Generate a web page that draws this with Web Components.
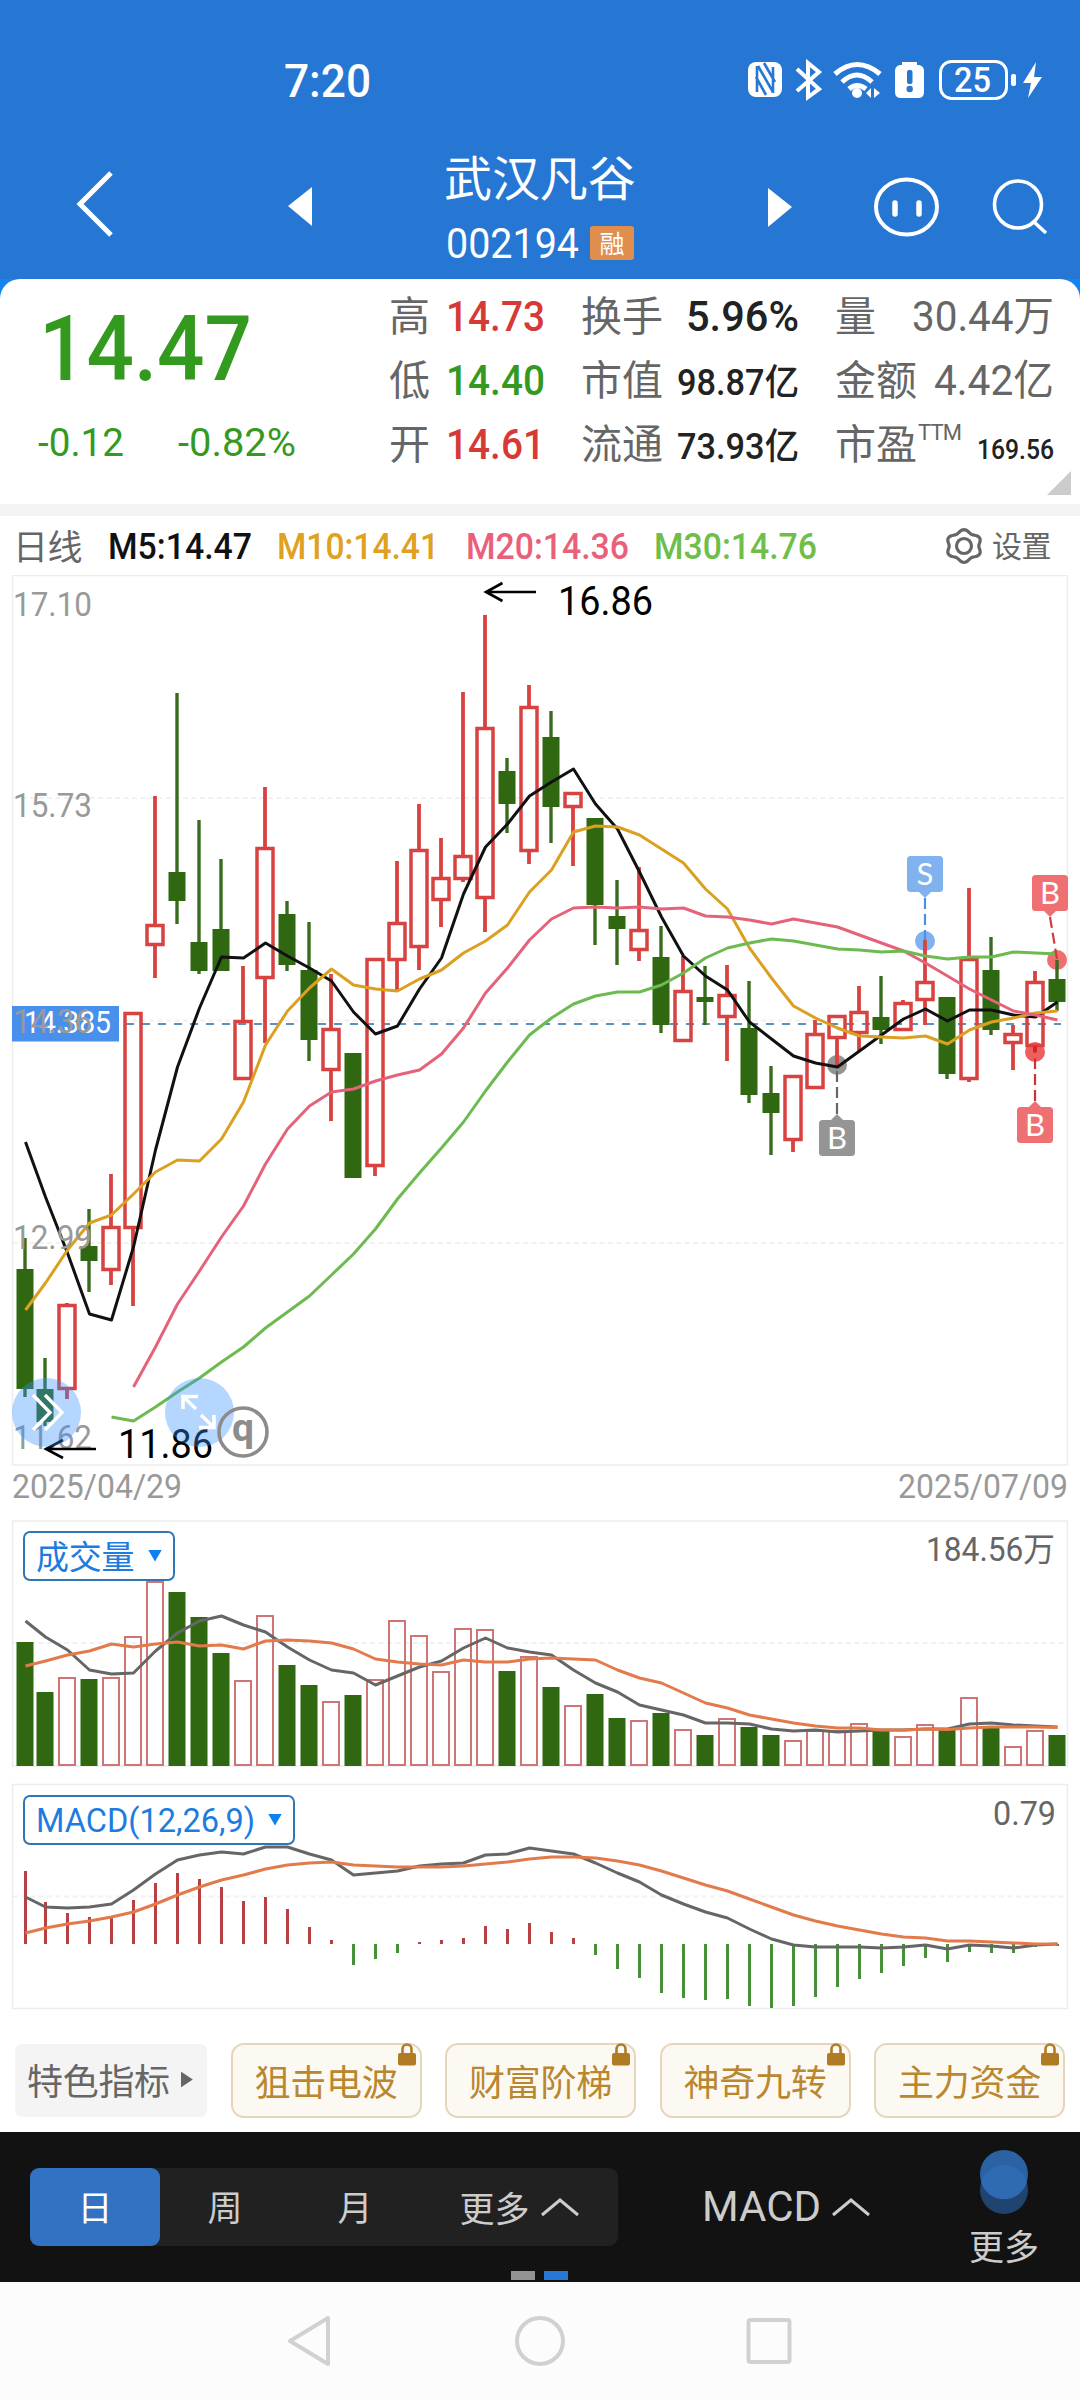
<!DOCTYPE html>
<html lang="zh-CN">
<head>
<meta charset="utf-8">
<title>武汉凡谷 002194</title>
<style>
html,body{margin:0;padding:0;background:#fff}
body{width:1080px;font-family:Roboto,"Noto Sans CJK SC",sans-serif;color:#222}
</style>
</head>
<body>
<stock-page></stock-page>
<script>
const define=(name,html,setup)=>{
  const t=document.createElement('template');t.innerHTML=html;
  customElements.define(name,class extends HTMLElement{
    connectedCallback(){
      if(this.shadowRoot)return;
      const r=this.attachShadow({mode:'open'});
      r.appendChild(t.content.cloneNode(true));
      if(setup)setup(this,r);
    }
  });
};

// Text stretched horizontally to a given width.
define('fit-text',`<style>:host{display:inline-block;white-space:nowrap;flex:none}span{display:inline-block;transform-origin:0 50%}</style><span><slot></slot></span>`,(el,r)=>{
  const w=+el.getAttribute('w'),s=r.querySelector('span');
  if(el.hasAttribute('size'))el.style.fontSize=el.getAttribute('size')+'px';
  const n=s.getBoundingClientRect().width;
  el.style.width=w+'px';
  s.style.transform='scaleX('+(w/n)+')';
});

define('status-bar',`<style>
:host{display:flex;height:160px;align-items:center;color:#fff}
fit-text{margin-left:284px;font-weight:500}
svg{margin-left:375px}
</style>
<fit-text w="87" size="47">7:20</fit-text>
<svg width="300" height="44" viewBox="746 58 300 44">
<rect x="748" y="62" width="34" height="35" rx="8" fill="#fff"/>
<path d="M757 66V92M758 66L773 92M773 67V93M764 63L775 82M756 77L766 95" stroke="#2577d3" stroke-width="2.6" fill="none"/>
<path d="M797 69L819 89L808 97V63L819 72L797 91" fill="none" stroke="#fff" stroke-width="4"/>
<g fill="none" stroke="#fff" stroke-width="5"><path d="M835 74Q857 55 880 74"/><path d="M842 82Q857 68 872 82"/><path d="M849 89Q857 82 866 89" /></g>
<circle cx="857" cy="93" r="5" fill="#fff"/>
<path d="M871 88V98L866 93ZM874 88V98L880 93Z" fill="#fff"/>
<path d="M902 62H917V65H919Q924 66 924 71V92Q924 98 918 98H901Q895 98 895 92V71Q895 66 900 65H902Z" fill="#fff"/>
<rect x="907" y="70" width="5.5" height="14" rx="2" fill="#2577d3"/><circle cx="909.7" cy="89" r="3.2" fill="#2577d3"/>
<rect x="940.5" y="61.500" width="66" height="37" rx="11" fill="none" stroke="#fff" stroke-width="3"/>
<rect x="1011" y="74" width="5" height="12" rx="2" fill="#fff"/>
<text x="954" y="92" font-family="Roboto" font-weight="500" font-size="35" textLength="37" lengthAdjust="spacingAndGlyphs" fill="#fff">25</text>
<path d="M1036 62L1023 83H1031L1028 98L1042 77H1034Z" fill="#fff"/>
</svg>`);

define('stock-header',`<style>
:host{display:flex;height:119px;align-items:flex-start;color:#fff}
svg{flex:none;display:block;overflow:visible}
.t{margin-left:134px;width:188px;height:110px;display:flex;flex-direction:column;margin-top:-10px}
.n{font-size:48px;line-height:50px;font-family:"Noto Sans CJK SC",sans-serif;white-space:nowrap;margin-left:-2px;letter-spacing:-.1px}
.c{display:flex;align-items:center;justify-content:space-between;height:34px;margin-top:26px}
.b{width:44px;height:34px;background:#e08e4d;border-radius:3px;font:25px/33px "Noto Sans CJK SC",sans-serif;text-align:center}
</style>
<svg style="margin-left:74px" width="40" height="100" viewBox="74 160 40 100"><path d="M111 173L80 204L111 235" fill="none" stroke="#fff" stroke-width="5"/></svg>
<svg style="margin-left:174px" width="24" height="100" viewBox="288 160 24 100"><path d="M288 206L312 187V226Z" fill="#fff"/></svg>
<div class="t"><div class="n">武汉凡谷</div><div class="c"><fit-text w="133" size="42">002194</fit-text><div class="b">融</div></div></div>
<svg style="margin-left:134px" width="24" height="100" viewBox="768 160 24 100"><path d="M792 207L768 188V227Z" fill="#fff"/></svg>
<svg style="margin-left:80px" width="70" height="100" viewBox="872 160 70 100"><ellipse cx="906.5" cy="207" rx="30.500" ry="27.500" fill="none" stroke="#fff" stroke-width="4"/><path d="M895 203V214M919 203V214" stroke="#fff" stroke-width="5.500" stroke-linecap="round"/></svg>
<svg style="margin-left:48px" width="60" height="100" viewBox="990 160 60 100"><circle cx="1018" cy="204.500" r="23.500" fill="none" stroke="#fff" stroke-width="3.600"/><path d="M1034 222L1046 233" stroke="#fff" stroke-width="3.600"/></svg>`);

define('quote-cell',`<style>
:host{display:flex;justify-content:space-between;align-items:baseline;height:64px;line-height:64px}
.l{font:41px/64px "Noto Sans CJK SC",sans-serif;color:#666;white-space:nowrap}
</style><span class="l"><slot name="label"></slot></span><slot></slot>`);

define('quote-panel',`<style>
:host{display:block;background:#1484f2}
.card{background:#fff;border-radius:20px 20px 0 0;height:225px;display:flex;position:relative}
.left{width:389px;color:#339a1f}
.p{margin:31px 0 0 39px;height:80px;line-height:80px;font-weight:500}
.d{display:flex;margin:33px 0 0 38px;height:40px;line-height:40px}
.d fit-text+fit-text{margin-left:54px}
.g{display:flex;padding-top:2px;gap:36px}
.c1{width:156px}.c2{width:218px}.c3{width:219px}
.r{color:#d63a36;font-weight:500}.k{color:#222;font-weight:500}.gr{color:#339a1f;font-weight:500}.s{color:#666}
sup{font:22px/22px Roboto;vertical-align:19px;letter-spacing:-.8px;margin-left:1px}
.fold{position:absolute;right:9px;top:192px;width:24px;height:24px;background:#ccc;clip-path:polygon(100% 0,100% 100%,0 100%)}
.gap{height:12px;background:#f4f4f4}
</style>
<div class="card"><div class="left"><div class="p"><fit-text w="213" size="90">14.47</fit-text></div>
<div class="d"><fit-text w="86" size="38">-0.12</fit-text><fit-text w="118" size="38">-0.82%</fit-text></div></div>
<div class="g">
<div class="c1">
<quote-cell><span slot="label">高</span><fit-text class="r" w="99" size="42">14.73</fit-text></quote-cell>
<quote-cell><span slot="label">低</span><fit-text class="gr" w="99" size="42">14.40</fit-text></quote-cell>
<quote-cell><span slot="label">开</span><fit-text class="r" w="99" size="42">14.61</fit-text></quote-cell></div>
<div class="c2">
<quote-cell><span slot="label">换手</span><fit-text class="k" w="113" size="42">5.96%</fit-text></quote-cell>
<quote-cell><span slot="label">市值</span><fit-text class="k" w="122" size="36">98.87亿</fit-text></quote-cell>
<quote-cell><span slot="label">流通</span><fit-text class="k" w="122" size="36">73.93亿</fit-text></quote-cell></div>
<div class="c3">
<quote-cell><span slot="label">量</span><fit-text class="s" w="142" size="42">30.44万</fit-text></quote-cell>
<quote-cell><span slot="label">金额</span><fit-text class="s" w="120" size="42">4.42亿</fit-text></quote-cell>
<quote-cell><span slot="label">市盈<sup>TTM</sup></span><fit-text class="k" w="77" size="28">169.56</fit-text></quote-cell></div>
</div><div class="fold"></div></div><div class="gap"></div>`);

define('ma-legend',`<style>
:host{display:flex;height:59px;align-items:center;font-weight:500}
.k{font:35px/50px "Noto Sans CJK SC",sans-serif;color:#666;width:70px;margin:-2px 0 0 13px;letter-spacing:-.5px}
svg{margin-left:128px}
.s{font:30px/50px "Noto Sans CJK SC",sans-serif;color:#666;margin:-3px 0 0 9px;letter-spacing:-.5px}
fit-text{position:relative;top:1px}
</style><span class="k">日线</span>
<fit-text style="margin-left:25px;color:#111" w="144" size="36">M5:14.47</fit-text>
<fit-text style="margin-left:25px;color:#e0a020" w="162" size="36">M10:14.41</fit-text>
<fit-text style="margin-left:27px;color:#e9607a" w="163" size="36">M20:14.36</fit-text>
<fit-text style="margin-left:25px;color:#6fbe4a" w="163" size="36">M30:14.76</fit-text>
<svg width="38" height="38" viewBox="-19 -19 38 38" fill="none" stroke="#666" stroke-width="3.200" stroke-linejoin="round"><path id="g"/><circle r="7.500"/></svg>
<span class="s">设置</span>`,(el,r)=>{
  let d='';
  for(let a=0;a<360;a+=6){
    const q=15.2-1.500*Math.cos(6*a*Math.PI/180),t=a*Math.PI/180;
    d+=(a?'L':'M')+(q*Math.cos(t)*1.08).toFixed(2)+' '+(q*Math.sin(t)*.98).toFixed(2);
  }
  r.getElementById('g').setAttribute('d',d+'Z');
});

const X=i=>i?23+22*i:25;
const RED='#d84240',GREEN='#306812';
const line=(ys,color,w=2.800,from=0,dx=.5)=>`<polyline fill="none" stroke="${color}" stroke-width="${w}" stroke-linejoin="round" points="${ys.map((y,k)=>(X(k+from)+dx)+','+y).join(' ')}"/>`;
const frame=(y1,y2)=>`<rect x="12.500" y="${y1}" width="1055" height="${y2-y1}" fill="none" stroke="#ececec" stroke-width="1.400"/>`;
const grid=y=>`<path d="M13 ${y}H1066" stroke="#f1f1f1" stroke-width="1.800" stroke-dasharray="5 3.500"/>`;
const label=(x,y,w,size,fill,s,extra='')=>`<text x="${x}" y="${y}" font-size="${size}" fill="${fill}" textLength="${w}" lengthAdjust="spacingAndGlyphs" ${extra}>${s}</text>`;

// colour, high, body top, body bottom, low
const candles=`G1238,1269,1389,1397 G1358,1389,1422,1426 R1303,1304,1390,1399 G1209,1246,1261,1292 R1174,1226,1271,1285 R1012,1012,1229,1306 R796,924,946,978 G693,872,901,924 G820,942,971,974 G859,929,971,971 R966,1020,1080,1080 R787,847,979,1043 G901,914,965,971 G922,970,1040,1061 R974,1028,1071,1121 G1053,1053,1178,1178 R958,958,1167,1176 R861,922,961,990 R804,849,948,970 R838,877,901,927 R692,855,880,882 R615,727,899,932 G758,771,804,833 R685,706,852,864 G711,737,807,843 R792,792,808,866 G818,818,905,945 G880,916,929,965 R867,929,951,961 G926,957,1025,1033 R956,990,1042,1042 G966,997,1002,1025 R965,994,1018,1061 G981,1028,1095,1103 G1066,1093,1113,1155 R1075,1075,1141,1152 R1020,1033,1089,1089 R1015,1015,1039,1066 R986,1011,1034,1051 G976,1017,1030,1044 R1000,1002,1031,1031 R940,981,1001,1025 G997,997,1074,1079 R888,958,1080,1082 G937,970,1030,1035 R1025,1033,1044,1070 R971,981,1047,1052 G960,979,1002,1011`.split(' ').map(s=>[s[0],...s.slice(1).split(',').map(Number)]);
const ma5=[1142,1197,1253,1314,1320,1247,1150,1067,1008,957,958,943,956,968,981,1012,1034,1026,989,958,894,847,824,796,782,769,804,829,872,917,956,976,990,1022,1039,1056,1063,1067,1051,1035,1019,1009,1021,1010,1010,1015,1017,1002];
const ma10=[1310,1283,1250,1223,1215,1194,1172,1160,1161,1139,1102,1045,1011,988,969,985,989,991,979,970,953,941,925,892,870,832,826,827,835,849,863,889,909,948,978,1006,1018,1028,1036,1037,1038,1036,1044,1030,1022,1018,1013,1011];
const ma20=[1387,1347,1304,1271,1237,1206,1164,1129,1106,1092,1089,1081,1075,1070,1054,1028,993,968,940,919,908,907,908,907,909,908,916,917,920,924,919,923,927,935,943,951,963,976,989,1000,1011,1015,1020];
const ma30=[1417,1421,1407,1392,1378,1362,1347,1328,1312,1296,1275,1254,1229,1199,1173,1148,1122,1091,1062,1035,1018,1004,996,992,992,985,973,958,948,943,939,941,945,949,950,952,951,956,959,957,957,952,953,954];

define('candle-chart',`<style>:host{display:block;height:892px}svg{display:block}text{font-family:Roboto,sans-serif}</style><div></div>`,(el,r)=>{
  let s=frame(575.500,1465)+grid(798)+grid(1020.500)+grid(1243);
  s+=`<path d="M126 1024H1061" stroke="#5b91bd" stroke-width="2" stroke-dasharray="8 8"/>`;
  const dot=(x,y,c)=>`<circle cx="${x}" cy="${y}" r="10" fill="${c}"/>`;
  s+=dot(925,941,'#7eb2f0')+dot(1057,960,'#ee6f6f')+dot(1035,1052,'#ee5f5f')+dot(837,1065,'#959595');
  candles.forEach(([c,h,t,b,l],i)=>{
    const x=X(i);
    if(c==='G')s+=`<path d="M${x} ${h}V${l}" stroke="#3a6c20" stroke-width="3.400"/><rect x="${x-8.500}" y="${t}" width="17" height="${b-t}" fill="${GREEN}"/>`;
    else s+=`<path d="M${x} ${h}V${t+1}M${x} ${b-1}V${l}" stroke="${RED}" stroke-width="3.800"/><rect x="${x-8}" y="${t+1.500}" width="16" height="${b-t-3}" fill="none" stroke="${RED}" stroke-width="3.500"/>`;
  });
  s+=line(ma5,'#111',3)+line(ma10,'#dba021',3)+line(ma20,'#e5637a',3,5)+line(ma30,'#6cba50',3,4);
  s+=`<path d="M1035 1046V1052" stroke="#d22" stroke-width="4"/>`;
  s+=`<rect x="12" y="1006" width="107" height="35.500" fill="#4990ec"/>`+label(24,1033,87,31,'#fff','14.385');
  [[616,'17.10'],[817,'15.73'],[1033,'14.36'],[1248.500,'12.99'],[1448.500,'11.62']].forEach(([y,t])=>s+=label(13,y,79,33,'#999',t));
  s+=`<path d="M536 592H486M502.500 583L486 592L502.500 601M96 1449H46M63 1440L46 1449L63 1458" fill="none" stroke="#000" stroke-width="2.600"/>`;
  s+=label(558,615,95,41,'#000','16.86')+label(118,1458,95,41,'#000','11.86');
  s+=`<g fill="#3391ff" fill-opacity=".37"><circle cx="46.500" cy="1412.500" r="34.500"/><circle cx="199.500" cy="1412.500" r="34.500"/></g>
  <path d="M33 1395L50 1412.500L33 1430M45 1395L62 1412.500L45 1430" fill="none" stroke="#fff" stroke-width="3.400"/>
  <path d="M198 1396.500H183V1409M183 1396.500L196 1409M199 1427.500H214V1415M214 1427.500L201 1415" fill="none" stroke="#fff" stroke-width="3.600"/>
  <circle cx="243" cy="1432" r="24" fill="none" stroke="#8c8c8c" stroke-width="3.600"/><text x="243" y="1440.500" text-anchor="middle" font-size="39" font-weight="700" fill="#8c8c8c">q</text>`;
  const flag=(x,y,c,t,up,lx,ly,lc)=>{
    const tip=up?y-6:y+42,base=up?y+1:y+35;
    return `<path d="M${x+18} ${tip}L${lx} ${ly}" stroke="${lc}" stroke-width="2.200" stroke-dasharray="11 5"/><rect x="${x}" y="${y}" width="36" height="36" rx="3.500" fill="${c}"/><path d="M${x+11} ${base}L${x+18} ${tip}L${x+25} ${base}Z" fill="${c}"/><text x="${x+18}" y="${y+29}" text-anchor="middle" font-size="31" style="font-family:Lato" fill="#fff">${t}</text>`;
  };
  s+=flag(907,856,'#80b2f0','S',0,925,940,'#4a90e0')+flag(1032,875,'#ee7072','B',0,1057,959,'#d33a3a')+flag(1017,1107,'#ee7072','B',1,1035,1052,'#c33')+flag(819,1120,'#959595','B',1,837,1066,'#666');
  r.querySelector('div').innerHTML=`<svg width="1080" height="892" viewBox="0 575 1080 892">${s}</svg>`;
});

define('date-axis',`<style>:host{display:flex;box-sizing:border-box;justify-content:space-between;align-items:center;height:40px;padding:0 12px 1px 12px;color:#999}</style><fit-text w="170" size="33">2025/04/29</fit-text><fit-text w="170" size="33">2025/07/09</fit-text>`);

define('indicator-picker',`<style>
:host{display:flex;box-sizing:border-box;position:absolute;left:23px;height:50px;align-items:center;justify-content:space-between;border:2px solid #2f76b8;border-radius:7px;background:#fff;color:#1d7ce0;padding:0 11px 0 11px}
i{width:14px;height:12px;background:#0f80f0;clip-path:polygon(0 0,100% 0,50% 100%);margin-top:-1px}
</style><slot></slot><i></i>`);

const vTop=[1642,1692,1677,1679,1677,1636,1581,1592,1617,1653,1680,1615,1665,1685,1701,1695,1679,1620,1635,1671,1628,1629,1671,1656,1687,1705,1694,1718,1720,1713,1729,1735,1718,1727,1735,1740,1730,1730,1723,1731,1736,1724,1730,1697,1728,1746,1730,1735];
const v5=[1621,1637,1650,1670,1674,1673,1651,1633,1621,1616,1625,1632,1647,1660,1670,1673,1685,1676,1667,1661,1648,1638,1648,1652,1655,1670,1683,1692,1705,1710,1715,1723,1723,1724,1729,1731,1730,1732,1731,1730,1730,1729,1729,1724,1723,1725,1726,1727];
const v10=[1666,1661,1655,1651,1644,1647,1644,1642,1646,1645,1649,1641,1640,1641,1643,1649,1659,1662,1664,1665,1660,1662,1662,1659,1658,1659,1660,1670,1678,1683,1693,1703,1708,1715,1719,1723,1726,1728,1728,1730,1730,1729,1729.5,1728,1727,1727,1727,1727.5];
define('volume-chart',`<style>:host{display:block;height:261px;position:relative}svg{display:block}text{font-family:Roboto,"Noto Sans CJK SC",sans-serif}indicator-picker{top:24px;width:152px}.n{font:33px/46px "Noto Sans CJK SC",sans-serif;letter-spacing:-.3px;position:relative;top:-1px}</style><div></div><indicator-picker><span class="n">成交量</span></indicator-picker>`,(el,r)=>{
  let s=frame(1521,1766)+grid(1643);
  vTop.forEach((y,i)=>{
    const x=X(i);
    s+=candles[i][0]==='G'?`<rect x="${x-8.500}" y="${y}" width="17" height="${1766-y}" fill="${GREEN}"/>`:`<rect x="${x-8}" y="${y+1}" width="16" height="${1765-y-1}" fill="none" stroke="#cd6f6f" stroke-width="1.900"/>`;
  });
  s+=line(v5,'#666',3)+line(v10,'#e27a4b',3)+label(926,1561,129,33,'#666','184.56万');
  r.querySelector('div').innerHTML=`<svg width="1080" height="261" viewBox="0 1507 1080 261">${s}</svg>`;
});

const hist=[1871,1902,1913,1917,1917,1900,1883,1873,1879,1887,1901,1897,1909,1927,1940,1965,1959,1953,1942,1940,1938,1926,1929,1923,1932,1938,1955,1969,1978,1993,1998,2000,1999,2006,2008,2006,1997,1987,1979,1973,1966,1958,1962,1952,1953,1953,1947,1946];
const dif=[1897,1907,1908,1907,1904,1890,1874,1860,1855,1852,1854,1847,1847,1854,1860,1875,1873,1871,1866,1864,1863,1855,1854,1848,1851,1854,1863,1873,1882,1895,1904,1912,1918,1929,1939,1945,1947,1947,1947,1948,1947,1945,1949,1945,1946,1948,1945,1944];
const dea=[1933,1928,1924,1921,1917,1912,1904,1895,1887,1880,1875,1869,1865,1863,1862,1865,1866,1867,1867,1867,1866,1864,1862,1859,1857,1857,1858,1861,1865,1871,1878,1885,1891,1899,1907,1915,1921,1926,1930,1934,1937,1938,1941,1941,1942,1943,1944,1944];
define('macd-chart',`<style>:host{display:block;height:244px;position:relative}svg{display:block}text{font-family:Roboto,sans-serif}indicator-picker{top:27px;width:272px}</style><div></div><indicator-picker><fit-text w="219" size="34">MACD(12,26,9)</fit-text></indicator-picker>`,(el,r)=>{
  let s=frame(1784.500,2008.500)+grid(1896.500);
  hist.forEach((y,i)=>s+=`<path d="M${X(i)+.5} 1944V${y}" stroke="${y<1944?'#b94042':'#46903a'}" stroke-width="3"/>`);
  s+=line(dif,'#666',3)+line(dea,'#e27a4b',3)+label(993,1824.500,63,33,'#666','0.79');
  r.querySelector('div').innerHTML=`<svg width="1080" height="244" viewBox="0 1768 1080 244">${s}</svg>`;
});

define('locked-chip',`<style>
:host{display:block;box-sizing:border-box;width:191px;height:75px;border:2px solid #e6d5b9;border-radius:13px;background:#fcf9f2;color:#b9872f;font:36px/70px "Noto Sans CJK SC",sans-serif;text-align:center;position:relative;letter-spacing:-.3px}
svg{position:absolute;right:3px;top:-3px}
</style><slot></slot><svg width="20" height="24" viewBox="0 0 20 24"><path d="M5.500 12V7A4.500 4.500 0 0 1 14.500 7V12" fill="none" stroke="#b07b22" stroke-width="2.600"/><rect x="1" y="11" width="18" height="12.500" rx="2" fill="#b07b22"/></svg>`);

define('feature-row',`<style>
:host{display:flex;height:120px;box-sizing:border-box;padding:31px 15px 0;justify-content:space-between}
.m{box-sizing:border-box;width:192px;height:73px;margin-top:1px;background:#f4f4f4;border-radius:7px;font:36px/71px "Noto Sans CJK SC",sans-serif;color:#666;padding:0 0 2px 12px;display:flex;align-items:center;gap:11px;letter-spacing:-.3px}
i{width:12px;height:16px;background:#666;clip-path:polygon(0 0,100% 50%,0 100%)}
</style><div class="m">特色指标<i></i></div><locked-chip>狙击电波</locked-chip><locked-chip>财富阶梯</locked-chip><locked-chip>神奇九转</locked-chip><locked-chip>主力资金</locked-chip>`);

define('tool-bar',`<style>
:host{display:flex;height:150px;background:#121212;color:#ccc;position:relative;font:35px/76px "Noto Sans CJK SC",sans-serif}
.seg{margin:36px 0 0 30px;width:588px;height:78px;border-radius:9px;background:#212121;display:flex;text-align:center}
.seg>span{width:130px;flex:none}.seg>.on{background:#3173c2;color:#fff;border-radius:9px;width:130px}
.seg>.more{flex:1;display:flex;align-items:center;justify-content:center;gap:11px;padding-right:12px;margin-left:12px}
.m{display:flex;height:78px;margin:36px 0 0 84px;width:169px;align-items:center;gap:11px;font-family:Roboto;color:#ccc}
.o{margin-left:96px;width:74px;display:flex;flex-direction:column;align-items:center}
.o span{line-height:40px;margin-top:10px}
.pg{position:absolute;left:511px;top:139px;display:flex;gap:9px}
.pg i{width:24px;height:9px;background:#939393}.pg i+i{background:#2577d3}
</style>
<div class="seg"><span class="on">日</span><span>周</span><span>月</span><span class="more">更多<svg width="38" height="20" viewBox="0 0 38 20"><path d="M1 18L19 3L37 18" fill="none" stroke="#ccc" stroke-width="3"/></svg></span></div>
<div class="m"><fit-text w="119" size="42" style="font-weight:400">MACD</fit-text><svg width="38" height="20" viewBox="0 0 38 20"><path d="M1 18L19 3L37 18" fill="none" stroke="#ccc" stroke-width="3"/></svg></div>
<div class="o"><svg width="50" height="66" viewBox="0 0 50 66" style="margin-top:17px"><circle cx="25" cy="41" r="24" fill="#204470"/><circle cx="25" cy="25" r="24" fill="#2a62a4"/><path d="M2 33A24 24 0 0 1 48 33A24 24 0 0 1 2 33" fill="#2e6bb2"/></svg><span>更多</span></div>
<div class="pg"><i></i><i></i></div>`);

define('nav-bar',`<style>:host{display:flex;height:118px;background:#fcfcfc;padding-left:286px}svg{display:block}</style>
<svg width="510" height="118" viewBox="286 2282 510 118" fill="none" stroke="#d1d1d1" stroke-width="4" stroke-linejoin="round"><path d="M328 2318V2364L290 2341Z"/><circle cx="540" cy="2341" r="23"/><rect x="748.500" y="2320" width="41" height="42" rx="2"/></svg>`);

define('stock-page',`<style>:host{display:block;width:1080px;height:2400px;overflow:hidden;background:#fff}header{background:#2577d3}</style>
<header><status-bar></status-bar><stock-header></stock-header></header>
<quote-panel></quote-panel><ma-legend></ma-legend>
<candle-chart></candle-chart><date-axis></date-axis><volume-chart></volume-chart><macd-chart></macd-chart>
<feature-row></feature-row><tool-bar></tool-bar><nav-bar></nav-bar>`);
</script>
</body>
</html>
